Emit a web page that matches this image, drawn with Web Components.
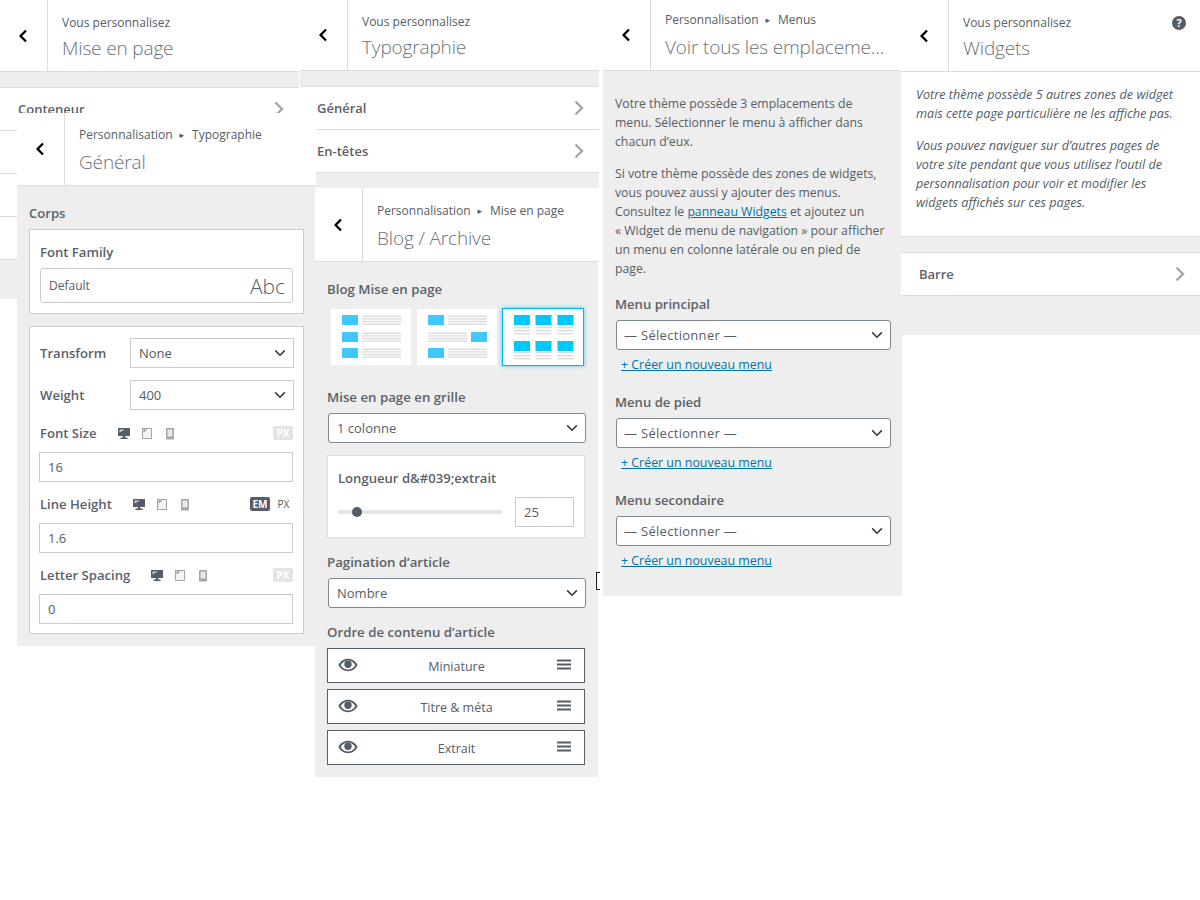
<!DOCTYPE html>
<html lang="fr"><head><meta charset="utf-8"><title>Personnalisation</title>
<style>
html,body{margin:0;padding:0;background:#fff;font-family:"Open Sans","Liberation Sans",sans-serif;color:#555d66}
</style></head>
<body>
<x-canvas>
  <x-panel style="--l:0px;--t:0;--w:299px;--z:1;--h:299px">
    <x-head crumb="Vous personnalisez" title="Mise en page" h="72" pt="13" tm="1"></x-head>
    <x-gap h="15"></x-gap>
    <x-row first>Conteneur</x-row><x-row></x-row><x-row></x-row><x-row></x-row>
  </x-panel>
  <x-panel style="--l:300px;--t:0;--w:299px;--z:1;--h:188px">
    <x-head crumb="Vous personnalisez" title="Typographie" h="71" pt="12" tm="1"></x-head>
    <x-gap h="15"></x-gap>
    <x-row first pl="17">Général</x-row><x-row pl="17">En-têtes</x-row>
  </x-panel>
  <x-panel style="--l:17px;--t:113px;--w:299px;--z:2;--h:533px">
    <x-head crumb="Personnalisation" crumb2="Typographie" title="Général" h="73" pt="12" tm="2"></x-head>
    <typo-body></typo-body>
  </x-panel>
  <x-panel style="--l:315px;--t:188px;--w:283px;--z:3;--h:589px">
    <x-head crumb="Personnalisation" crumb2="Mise en page" title="Blog / Archive" h="74" pt="13" tm="2"></x-head>
    <blog-body></blog-body>
  </x-panel>
  <x-panel style="--l:603px;--t:0;--w:299px;--z:4;--h:596px">
    <x-head crumb="Personnalisation" crumb2="Menus" title="Voir tous les emplaceme..." h="71" pt="10" tm="2"></x-head>
    <menus-body></menus-body>
  </x-panel>
  <x-panel style="--l:901px;--t:0;--w:299px;--z:5;--h:335px">
    <x-head crumb="Vous personnalisez" title="Widgets" help="1" h="72" pt="13" tm="1"></x-head>
    <widgets-body></widgets-body>
    <x-gap h="15"></x-gap>
    <x-row first>Barre</x-row>
  </x-panel>
  <x-cursor></x-cursor>
</x-canvas>

<script>
const FONT = '"Open Sans","Liberation Sans",sans-serif';
const css = s => `<style>${s}</style>`;
function def(name, render){
  customElements.define(name, class extends HTMLElement{
    constructor(){super();this.attachShadow({mode:'open'});}
    connectedCallback(){this.shadowRoot.innerHTML = render(this);}
  });
}
const LABEL = `font:600 13.1px/20px ${FONT};color:#5a6168;`;

def('x-canvas', ()=>css(`:host{display:block;position:relative;width:1200px;height:900px;overflow:hidden;font-family:${FONT}}`)+`<slot></slot>`);

def('x-panel', ()=>css(`:host{display:block;position:absolute;left:var(--l);top:var(--t);width:var(--w);height:var(--h);z-index:var(--z);background:#eee;overflow:hidden}`)+`<slot></slot>`);

def('x-gap', el=>css(`:host{display:block;height:${el.getAttribute('h')}px}`));

const CRUMB = (a,b)=> b ? `${a}<span class="tri">▸</span>${b}` : a;
def('x-head', el=>{
  const h = el.getAttribute('h');
  const a = el.getAttribute('crumb'), b = el.getAttribute('crumb2');
  return css(`
  :host{display:flex;height:${h}px;box-sizing:border-box;background:#fff;border-bottom:1px solid #ddd;font-family:${FONT};position:relative}
  .back{width:47px;flex:none;border-right:1px solid #ddd;display:flex;align-items:center;justify-content:center}
  .back svg{margin-right:1px}
  .txt{flex:1;min-width:0;padding:${el.getAttribute('pt')}px 0 0 14px;}
  .crumb{font-size:12px;line-height:20px;color:#555d66;white-space:nowrap}
  .tri{font-size:9px;margin:0 8px 0 7px;font-family:"DejaVu Sans",sans-serif;position:relative;top:-1px}
  .title{font-size:19px;letter-spacing:-.15px;font-weight:300;line-height:28px;color:#6b7278;margin-top:${el.getAttribute('tm')}px;white-space:nowrap}
  .help{position:absolute;right:14px;top:16px;width:14px;height:14px;border-radius:50%;background:#555d66;color:#fff;font:700 11px/14px ${FONT};text-align:center}
  `)+`<div class="back"><svg width="10" height="14" viewBox="0 0 10 14"><path d="M8 1.500 2.600 7 8 12.500" fill="none" stroke="#000" stroke-width="2.300"/></svg></div>
  <div class="txt"><div class="crumb">${CRUMB(a,b)}</div><div class="title">${el.getAttribute('title')}</div></div>
  ${el.hasAttribute('help')?'<div class="help">?</div>':''}`;
});

def('x-row', el=>css(`
  :host{display:flex;align-items:center;justify-content:space-between;height:43px;box-sizing:border-box;background:#fff;
    border-bottom:1px solid #ddd;${el.hasAttribute('first')?'border-top:1px solid #ddd;height:44px;':''}
    padding:0 15px 0 ${el.getAttribute('pl')||18}px;font:600 13px/20px ${FONT};color:#5a6168}
`)+`<span><slot></slot></span><svg width="10" height="16" viewBox="0 0 10 16"><path d="M1.500 1.500 8 8 1.500 14.500" fill="none" stroke="#a0a5aa" stroke-width="2.300"/></svg>`);

/* form bits */
const CHEV = `<svg width="12" height="8" viewBox="0 0 12 8"><path d="M1.200 1.400 6 6.200 10.800 1.400" fill="none" stroke="#32373c" stroke-width="1.500"/></svg>`;
def('x-sel', el=>{
  const wp = el.hasAttribute('wp');
  return css(`:host{display:flex;align-items:center;justify-content:space-between;box-sizing:border-box;height:30px;background:#fff;
   border:1px solid ${wp?'#7e8993':'#ccc'};border-radius:${wp?3:0}px;padding:0 7px 0 8px;font:400 13px/20px ${FONT};color:#555d66;flex:${wp?'none':'1'}}
   span{letter-spacing:${el.getAttribute('ls')||0}px;margin-left:${el.getAttribute('ml')||0}px}`)
   +`<span><slot></slot></span>${CHEV}`;
});
def('x-label', ()=>css(`:host{display:block;${LABEL}}`)+`<slot></slot>`);
def('x-input', ()=>css(`:host{display:block;box-sizing:border-box;height:30px;background:#fff;border:1px solid #ccc;padding:0 8px;font:400 13px/28px ${FONT};color:#555d66}`)+`<slot></slot>`);
def('x-card', ()=>css(`:host{display:block;box-sizing:border-box;background:#fff;border:1px solid #ccc;}`)+`<slot></slot>`);

const DESK = c=>`<svg width="14" height="13" viewBox="0 0 14 13"><path d="M1 1h12v8H8.200v1.500H10.500V12h-7v-1.500h2.300V9H1z" fill="${c}"/><path d="M2.500 2.500H8L2.500 5.500z" fill="#ccc"/></svg>`;
const TAB = `<svg width="12" height="13" viewBox="0 0 12 13"><rect x="1" y="1" width="10" height="11" fill="#a0a5aa"/><rect x="2" y="2" width="8" height="9" fill="#f4f4f4"/><path d="M2.500 2.500H6.500L2.500 5.500z" fill="#8f959a"/></svg>`;
const MOB = `<svg width="10" height="13" viewBox="0 0 10 13"><rect x="1" y="1" width="8" height="11.500" rx="1" fill="#a0a5aa"/><rect x="2.500" y="2.500" width="5" height="7" fill="#e8e8e8"/></svg>`;
def('x-resp', el=>{
  const em = el.hasAttribute('em');
  return css(`:host{display:flex;align-items:center;height:20px}
   .l{${LABEL}margin-right:20px;white-space:nowrap}
   .i{display:flex;align-items:center;width:24px}
   .u{margin-left:auto;display:flex;align-items:center;height:14px}
   .b{font:700 10px/14px ${FONT};width:20px;height:14px;text-align:center;border-radius:2px}
   .off{background:#e4e4e4;color:#fff}
   .on{background:#555d66;color:#fff;margin-right:7px}
   .p{font:400 10px/14px ${FONT};color:#555d66;width:13px;margin-right:3px;text-align:center}
  `)+`<span class="l"><slot></slot></span><span class="i">${DESK('#555d66')}</span><span class="i">${TAB}</span><span class="i">${MOB}</span>
  <span class="u">${em?'<span class="b on">EM</span><span class="p">PX</span>':'<span class="b off">PX</span>'}</span>`;
});

def('typo-body', ()=>css(`
  :host{display:block;padding:17px 12px 0;font-family:${FONT}}
  .h{${LABEL}height:20px;margin-bottom:6px}
  .c1{height:85px;padding:12px 10px 0 10px;}
  .ff{box-sizing:border-box;height:35px;margin-top:6px;border:1px solid #ccc;border-radius:3px;display:flex;align-items:center;justify-content:space-between;padding:1px 7px 0 8px;font:400 12px/20px ${FONT};color:#555d66}
  .ff b{font:300 21px/28px ${FONT}}
  .c2{margin-top:12px;height:308px;padding:11px 10px 0 9px}
  .r{display:flex;align-items:center;height:30px;margin:0 -1px 12px 0;padding-left:1px}
  .r span{width:90px;${LABEL}flex:none}
  x-resp{padding-left:1px;margin-bottom:9px}
  x-input{margin-bottom:12px}
`)+`<div class="h">Corps</div>
 <x-card class="c1"><x-label>Font Family</x-label><div class="ff"><span>Default</span><b>Abc</b></div></x-card>
 <x-card class="c2">
   <div class="r"><span>Transform</span><x-sel>None</x-sel></div>
   <div class="r" style="margin-bottom:13px"><span>Weight</span><x-sel>400</x-sel></div>
   <x-resp>Font Size</x-resp><x-input>16</x-input>
   <x-resp em>Line Height</x-resp><x-input>1.6</x-input>
   <x-resp>Letter Spacing</x-resp><x-input>0</x-input>
 </x-card>`);

/* layout thumbnails */
const L = (x,y,w,n=4,st=2.6)=>Array.from({length:n},(_,i)=>`<rect x="${x}" y="${y+i*st}" width="${w}" height="1.4" fill="#dcdcdc"/>`).join('');
const T = (x,y,f)=>`<rect x="${x}" y="${y}" width="16" height="10" fill="${f}"/>`;
const C1 = '#41c6ff', C2 = '#00c8ff';
const svgL = rows=>`<svg width="80" height="56" viewBox="0 0 80 56">${rows}</svg>`;
const img1 = svgL([6,23,39].map(y=>T(11,y,C1)+L(31,y+.6,39)).join(''));
const img2 = svgL(T(11,6,C1)+L(31,6.6,39)+T(54,23,C1)+L(11,23.6,39)+T(11,39,C1)+L(31,39.6,39));
const img3 = `<svg width="80" height="56" viewBox="0 0 80 56">${[0,21.5,43.5].map(d=>{const x=11+d;
    return T(x,6,C2)+L(x,18,16,3,3)+T(x,32,C2)+L(x,43,16,3,3);}).join('')}</svg>`;

const EYE = `<svg width="20" height="14" viewBox="0 0 20 14"><path fill-rule="evenodd" fill="#555d66" d="M10 .8C5.800.8 2.400 3.200.4 7c2 3.800 5.400 6.200 9.600 6.200S17.600 10.800 19.600 7C17.600 3.200 14.200.8 10 .8zM10 2.400c3 0 5.600 1.700 7.300 4.600-1.700 2.900-4.300 4.600-7.300 4.600S4.400 9.900 2.700 7C4.400 4.100 7 2.400 10 2.400z"/><circle cx="10" cy="6.300" r="3.700" fill="#555d66"/></svg>`;
const BARS = `<svg width="14" height="11" viewBox="0 0 14 11"><path d="M0 .5h14v2H0zM0 4.500h14v2H0zM0 8.500h14v2H0z" fill="#555d66"/></svg>`;
def('x-order', ()=>css(`:host{display:flex;align-items:center;box-sizing:border-box;height:35px;width:258px;background:#fff;border:1px solid #555d66;padding:0 13px 2px 10px;margin-bottom:6px;font:400 12.5px/20px ${FONT};color:#555d66}
 span{flex:1;text-align:center;position:relative;top:2px;left:-1px}`)+EYE+`<span><slot></slot></span>`+BARS);

def('blog-body', ()=>css(`
 :host{display:block;padding:17px 12px 0;font-family:${FONT}}
 .h{${LABEL}font-size:13.25px;height:20px}
 .imgs{display:flex;margin:9px 0 0 4px;height:58px;align-items:center}
 .im{width:80px;height:56px;background:#fff;display:block}
 .im svg{display:block}
 .sel{box-sizing:border-box;width:82px;height:58px;border:1px solid #00b9eb;box-shadow:0 0 4px rgba(0,185,235,.7);margin-left:5px}
 x-sel[wp]{margin-left:1px;width:258px}
 .card{margin-top:12px;width:258px;height:83px;padding:12px 10px 0;border-color:#ddd}
 .sl{display:flex;align-items:center;margin-top:9px}
 .tr{width:164px;height:4px;border-radius:2px;background:#e5e5e5;position:relative;flex:none}
 .th{position:absolute;left:14px;top:-3px;width:10px;height:10px;border-radius:50%;background:#555d66}
 x-input{width:59px;margin-left:13px}
`)+`<div class="h">Blog Mise en page</div>
 <div class="imgs"><div class="im">${img1}</div><div class="im" style="margin-left:6px">${img2}</div><div class="im sel">${img3}</div></div>
 <div class="h" style="margin-top:21px;margin-bottom:6px">Mise en page en grille</div>
 <x-sel wp>1 colonne</x-sel>
 <x-card class="card"><x-label>Longueur d&amp;#039;extrait</x-label><div class="sl"><div class="tr"><div class="th"></div></div><x-input>25</x-input></div></x-card>
 <div class="h" style="margin-top:14px;margin-bottom:6px">Pagination d’article</div>
 <x-sel wp>Nombre</x-sel>
 <div class="h" style="margin-top:14px;margin-bottom:6px">Ordre de contenu d’article</div>
 <x-order>Miniature</x-order><x-order>Titre &amp; méta</x-order><x-order>Extrait</x-order>`);

def('x-menuloc', el=>css(`:host{display:block;margin-bottom:17px}
 .h{${LABEL}height:20px;margin-bottom:6px}
 x-sel{width:275px;margin-left:1px}
 a{display:inline-block;margin:5px 0 0 6px;font:400 12.4px/20px ${FONT};color:#0073aa;text-decoration:underline}
`)+`<div class="h">${el.getAttribute('label')}</div><x-sel wp ls=".3" ml="-1">— Sélectionner —</x-sel><a href="#">+ Créer un nouveau menu</a>`);

def('menus-body', ()=>css(`:host{display:block;padding:23px 12px 0;font:400 12.25px/19px ${FONT};color:#555d66}
 p{margin:0 0 13px;}
 a{color:#0073aa}
 .m{margin-top:16px}
`)+`<p>Votre thème possède 3 emplacements de<br>menu. Sélectionner le menu à afficher dans<br>chacun d’eux.</p>
<p>Si votre thème possède des zones de widgets,<br>vous pouvez aussi y ajouter des menus.<br>Consultez le <a href="#">panneau Widgets</a> et ajoutez un<br>« Widget de menu de navigation » pour afficher<br>un menu en colonne latérale ou en pied de<br>page.</p>
<div class="m"><x-menuloc label="Menu principal"></x-menuloc><x-menuloc label="Menu de pied"></x-menuloc><x-menuloc label="Menu secondaire"></x-menuloc></div>`);

def('widgets-body', ()=>css(`:host{display:block;background:#fff;border-bottom:1px solid #ddd;box-sizing:border-box;height:165px;padding:13px 14px 0 15px;font:italic 400 12.65px/19px ${FONT};color:#555d66}
 p{margin:0 0 13px}`)+`<p>Votre thème possède 5 autres zones de widget<br>mais cette page particulière ne les affiche pas.</p>
<p>Vous pouvez naviguer sur d’autres pages de<br>votre site pendant que vous utilisez l’outil de<br>personnalisation pour voir et modifier les<br>widgets affichés sur ces pages.</p>`);

def('x-cursor', ()=>css(`:host{display:block;position:absolute;left:596px;top:572px;width:4px;height:18px;box-sizing:border-box;border:1px solid #222;border-right:0;z-index:9}`));
</script>
</body></html>
